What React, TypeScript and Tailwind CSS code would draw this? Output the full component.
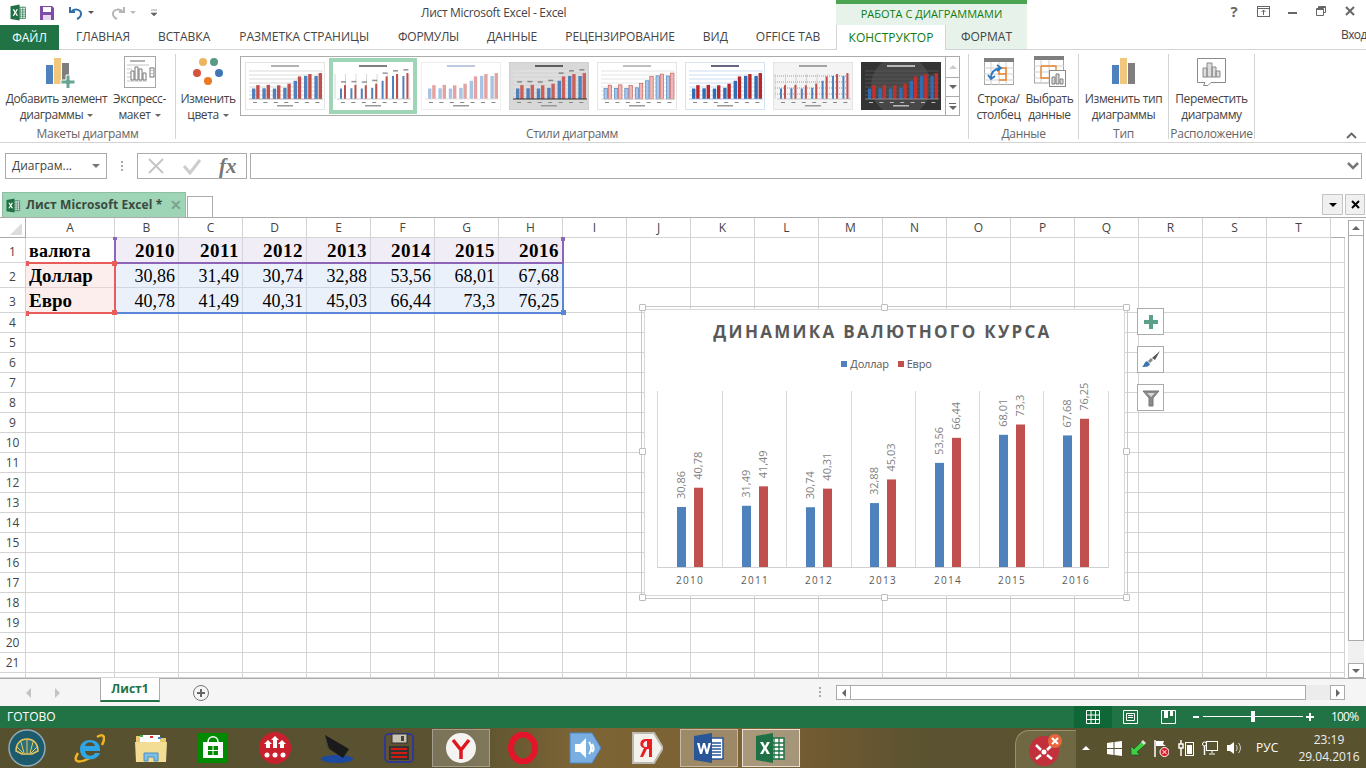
import type { ReactNode } from 'react';

const years = [2010, 2011, 2012, 2013, 2014, 2015, 2016];
const usd = ['30,86', '31,49', '30,74', '32,88', '53,56', '68,01', '67,68'];
const eur = ['40,78', '41,49', '40,31', '45,03', '66,44', '73,3', '76,25'];
const num = (s: string) => parseFloat(s.replace(',', '.'));
const columns = ['A', 'B', 'C', 'D', 'E', 'F', 'G', 'H', 'I', 'J', 'K', 'L', 'M', 'N', 'O', 'P', 'Q', 'R', 'S', 'T'];

// --- small office icons ---
function ExcelLogo({ size = 16 }: { size?: number }) {
  return (
    <svg width={size} height={size} viewBox="0 0 32 32">
      <path d="M12 6h17v21H12z" fill="#fff" stroke="#1f7145" strokeWidth="1.5" />
      <path d="M19 6v21M24 6v21M14 11h15M14 15h15M14 19h15M14 23h15" stroke="#1f7145" strokeWidth="1.3" />
      <path d="M1 4l17-3v30L1 28z" fill="#1f7145" />
      <path d="M5 10h3l2 4 2-4h3l-3.5 6 3.5 6h-3l-2-4-2 4H5l3.5-6z" fill="#fff" />
    </svg>
  );
}

function WordLogo() {
  return (
    <svg width="32" height="32" viewBox="0 0 32 32">
      <path d="M12 6h18v21H12z" fill="#fff" stroke="#2a5699" strokeWidth="1.5" />
      <path d="M19 11h9M19 14h9M19 17h9M19 20h9M19 23h9" stroke="#2a5699" strokeWidth="1.5" />
      <path d="M1 4l18-3v30L1 28z" fill="#2a5699" />
      <path d="M4 11h2.5l1.5 7 2-7h2l2 7 1.500-7H18l-3 11h-2l-2-7-2 7H7z" fill="#fff" />
    </svg>
  );
}

function BarsIcon({ plus }: { plus?: boolean }) {
  return (
    <svg width="32" height="32" viewBox="0 0 32 32">
      <rect x="1" y="9" width="7" height="19" fill="#4f81bd" />
      <rect x="9" y="2" width="7" height="26" fill="#f0c77c" />
      <rect x="17" y="7" width="7" height="21" fill="#7f7f7f" />
      {plus && <path d="M21 19h4v5h5v4h-5v5h-4v-5h-5v-4h5z" fill="#68a593" stroke="#fff" strokeWidth="1" />}
    </svg>
  );
}

function QuickLayoutIcon() {
  return (
    <svg width="32" height="32" viewBox="0 0 32 32" fill="none">
      <rect x=".5" y=".5" width="31" height="31" fill="#fff" stroke="#a6a6a6" />
      <path d="M6 5h15" stroke="#9a9a9a" strokeWidth="1.500" />
      <path d="M3 9h22M3 13h5M3 17h5M3 21h5M3 25h20" stroke="#c4c4c4" />
      <path d="M7 24v-9h3v9zM11 24V11h3v13zM15 24v-11h3v11zM19 24v-7h3v7z" fill="#fff" stroke="#777" />
      <rect x="26" y="12" width="4" height="9" stroke="#777" />
      <path d="M28 14v1M28 17v1" stroke="#777" />
    </svg>
  );
}

function ColorsIcon() {
  return (
    <svg width="32" height="32" viewBox="0 0 32 32">
      <circle cx="11" cy="6" r="4" fill="#edb55e" />
      <circle cx="22" cy="6" r="4" fill="#579b85" />
      <circle cx="5" cy="17" r="4" fill="#d6533d" />
      <circle cx="27" cy="17" r="4" fill="#3f77b4" />
      <circle cx="16" cy="25" r="4" fill="#ea7a25" />
    </svg>
  );
}

function SwitchRowIcon() {
  return (
    <svg width="30" height="28" viewBox="0 0 30 28" fill="none">
      <rect x=".5" y=".5" width="29" height="26" fill="#fff" stroke="#a6a6a6" />
      <rect x="0" y="0" width="30" height="4" fill="#7f7f7f" />
      <path d="M0 10h30M0 16h30M0 22h30M7 4v23M15 4v23M22 4v23" stroke="#cfcfcf" />
      <path d="M15 16h7v-6h-7zM15 22h7v-6" stroke="#e8842c" strokeWidth="1.500" />
      <path d="M7 20c0-6 4-9 9-10M13 7l4 3-4 3M4 17l3 4 4-3" stroke="#2f77c0" strokeWidth="1.800" />
    </svg>
  );
}

function SelectDataIcon() {
  return (
    <svg width="32" height="32" viewBox="0 0 32 32" fill="none">
      <rect x=".5" y="1" width="29" height="26" fill="#fff" stroke="#a6a6a6" />
      <rect x="0" y="0" width="30" height="4" fill="#7f7f7f" />
      <path d="M0 10h30M0 16h30M0 22h30M7 4v23M15 4v23" stroke="#cfcfcf" />
      <path d="M7 10h15v7M7 10v12h8" stroke="#e8842c" strokeWidth="1.300" />
      <rect x="15.500" y="14.500" width="16" height="16" fill="#fff" stroke="#8a8a8a" />
      <path d="M18 28v-7h3v7zM22 28v-10h3v10zM26 28v-5h3v5z" fill="#d8d8d8" stroke="#7f7f7f" />
    </svg>
  );
}

function MoveChartIcon() {
  return (
    <svg width="30" height="28" viewBox="0 0 30 28" fill="none">
      <path d="M.5.500h28v24H14l-3 3H6.500l1.500-3H.5z" fill="#fff" stroke="#8a8a8a" />
      <path d="M6 19v-9h4v9zM10 19V5h5v14zM15 19V9h4v10zM19 19v-6h4v6z" fill="#dcdcdc" stroke="#8a8a8a" />
    </svg>
  );
}

function Caret({ className = 'border-t-[#666]' }: { className?: string }) {
  return <span className={`inline-block w-0 h-0 border-x-[3px] border-x-transparent border-t-[3px] ml-1 align-middle ${className}`} />;
}

// --- gallery thumbnails (illegible tiny previews) ---
type ThumbStyle = {
  bg: string;
  border: string;
  blue: string;
  red: string;
  title: string;
  grid?: 'h' | 'v' | 'hatch';
  gridColor?: string;
  base?: string;
  outline?: boolean;
  labels?: boolean;
  slim?: boolean;
};

const thumbs: ThumbStyle[] = [
  { bg: '#fff', border: '#e4e4e4', blue: '#4f81bd', red: '#c0504d', title: '#999', grid: 'h', gridColor: '#d0d0d0', base: '#999' },
  { bg: '#fff', border: '#fff', blue: '#4f81bd', red: '#c0504d', title: '#555', grid: 'v', gridColor: '#cfcfcf', base: '#bbb', labels: true, slim: true },
  { bg: '#fff', border: '#eee', blue: '#a9c3e4', red: '#e3a3a0', title: '#a8b7d6', grid: 'h', gridColor: '#fff', base: '#ddd' },
  { bg: '#d8d8d8', border: '#d0d0d0', blue: '#4f81bd', red: '#c9605c', title: '#333', grid: 'h', gridColor: '#e8e8e8', base: '#333', labels: true },
  { bg: '#fff', border: '#e4e4e4', blue: '#a9c6ea', red: '#f0b8b4', title: '#aaa', grid: 'h', gridColor: '#ddd', base: '#ccc', outline: true },
  { bg: '#fff', border: '#d5e4f5', blue: '#2f6db5', red: '#b8282b', title: '#335', grid: 'h', gridColor: '#bcd4ee', base: '#8fb3dc' },
  { bg: '#f4f4f4', border: '#e4e4e4', blue: '#4f81bd', red: '#c0504d', title: '#888', grid: 'hatch', gridColor: '#c9c9c9', base: '#bbb', slim: true },
  { bg: '#333', border: '#333', blue: '#2f6db5', red: '#c2302e', title: '#ddd', grid: 'h', gridColor: '#5a5a5a', base: '#999' },
];

function Thumb({ s, selected }: { s: ThumbStyle; selected?: boolean }) {
  const base = 37;
  return (
    <div className={`w-[80px] h-[48px] shrink-0 ${selected ? 'ring-4 ring-[#9fd5b7]' : ''}`}>
      <svg width="80" height="48" viewBox="0 0 80 48">
        <rect x=".5" y=".5" width="79" height="47" fill={s.bg} stroke={s.border} />
        {s.bg === '#333' && <circle cx="40" cy="24" r="30" fill="#555" opacity=".6" />}
        <rect x="26" y="3" width="28" height="2" fill={s.title} opacity=".75" />
        {s.grid === 'h' && [9, 13, 17, 21, 25, 29, 33].map((y) => <path key={y} d={`M4 ${y}h74`} stroke={s.gridColor} strokeWidth=".8" />)}
        {(s.grid === 'v' || s.grid === 'hatch') && [2, 12.500, 23, 33.500, 44, 54.500, 65, 76].map((x) => <path key={x} d={`M${x} 12V${base}`} stroke={s.gridColor} strokeWidth=".8" />)}
        {s.grid === 'hatch' && [14, 20, 26, 32].map((y) => <path key={y} d={`M2 ${y}h74`} stroke={s.gridColor} strokeWidth="2" strokeDasharray="1 1" />)}
        {years.map((_, i) => {
          const x = 7 + i * 10.4;
          const w = s.slim ? 2 : 3.4;
          const hu = num(usd[i]) * 0.34;
          const he = num(eur[i]) * 0.34;
          return (
            <g key={i}>
              <rect x={x} y={base - hu} width={w} height={hu} fill={s.blue} stroke={s.outline ? '#3f77b4' : 'none'} strokeWidth=".6" />
              <rect x={x + w + (s.slim ? 2 : 0.8)} y={base - he} width={w} height={he} fill={s.red} stroke={s.outline ? '#c0504d' : 'none'} strokeWidth=".6" />
              {s.labels && <rect x={x + 1} y={base - he - 4} width={5} height={1.500} fill="#666" opacity=".7" />}
              <rect x={x + 1} y={40} width={4} height={1} fill={s.bg === '#333' ? '#bbb' : '#888'} />
            </g>
          );
        })}
        <path d={`M4 ${base}h74`} stroke={s.base} strokeWidth={s.base === '#333' ? 1.2 : 0.8} />
        <rect x="32" y="43" width="16" height="1.500" fill={s.bg === '#333' ? '#bbb' : '#999'} />
      </svg>
    </div>
  );
}

function RibbonButton({ icon, lines, caret, width }: { icon: ReactNode; lines: string[]; caret?: boolean; width: string }) {
  return (
    <div className={`flex flex-col items-center ${width}`}>
      <div className="h-[36px] flex items-center justify-center">{icon}</div>
      <div className="text-center leading-[16px] mt-[1px] whitespace-nowrap tracking-[-0.4px]">
        <div>{lines[0]}</div>
        <div>
          {lines[1]}
          {caret && <Caret />}
        </div>
      </div>
    </div>
  );
}

function RibbonGroup({ label, width, children }: { label: string; width: string; children: ReactNode }) {
  return (
    <div className={`${width} shrink-0 flex flex-col h-[85px] mt-[4px] border-r border-[#d4d4d4]`}>
      <div className="flex-1 flex">{children}</div>
      <div className="text-center text-[#666] leading-[16px] -mb-[3px] whitespace-nowrap tracking-[-0.3px]">{label}</div>
    </div>
  );
}

function TitleBar() {
  return (
    <div className="h-[25px] flex items-center relative shrink-0 bg-white">
      <div className="ml-[10px]"><ExcelLogo size={17} /></div>
      <svg className="ml-[12px]" width="16" height="16" viewBox="0 0 16 16">
        <path d="M1 1h12l2 2v12H1z" fill="#7f4ba6" />
        <rect x="4" y="2" width="8" height="5" fill="#fff" />
        <rect x="4" y="10" width="8" height="5" fill="#e4d6ee" />
      </svg>
      <svg className="ml-[13px]" width="16" height="16" viewBox="0 0 16 16" fill="none">
        <path d="M2 2v5h5" stroke="#2f6ea9" strokeWidth="2" />
        <path d="M3 7c3-4 10-3 10 2 0 3-2 4-4 5" stroke="#2f6ea9" strokeWidth="2" />
      </svg>
      <Caret className="border-t-[#555]" />
      <svg className="ml-[16px]" width="16" height="16" viewBox="0 0 16 16" fill="none">
        <path d="M14 2v5H9" stroke="#b5b5b5" strokeWidth="2" />
        <path d="M13 7c-3-4-10-3-10 2 0 3 2 4 4 5" stroke="#b5b5b5" strokeWidth="2" />
      </svg>
      <Caret className="border-t-[#bbb]" />
      <svg className="ml-[14px]" width="8" height="8" viewBox="0 0 8 8"><path d="M1 1h6M1 4h6l-3 3z" fill="#666" stroke="#666" strokeWidth=".6" /></svg>

      <div className="absolute left-[421px] top-[4px] text-[#444] whitespace-nowrap tracking-[-0.3px]">Лист Microsoft Excel - Excel</div>

      <div className="absolute left-[836px] top-0 w-[191px] h-[25px] bg-[#e7f3ea] border-t-[4px] border-[#4aa451] text-center text-[11px] text-[#107c10] leading-[20px]">РАБОТА С ДИАГРАММАМИ</div>

      <div className="absolute left-[1228px] top-[3px] w-[12px] text-center font-bold text-[15px] leading-[17px] text-[#666]">?</div>
      <svg className="absolute left-[1257px] top-[6px]" width="13" height="11" viewBox="0 0 13 11" fill="none">
        <rect x=".5" y=".5" width="12" height="10" stroke="#666" />
        <path d="M0 2.500h13M6.500 9V4M4.500 6l2-2 2 2" stroke="#666" />
      </svg>
      <div className="absolute left-[1288px] top-[12px] w-[9px] h-[2px] bg-[#666]" />
      <svg className="absolute left-[1316px] top-[6px]" width="10" height="10" viewBox="0 0 10 10" fill="none">
        <path d="M2.500 2.500V.5h7v6H7.500M.5 2.500h7v7h-7z" stroke="#666" />
        <path d="M.5 3.500h7M2.500 1.500h7" stroke="#666" />
      </svg>
      <svg className="absolute left-[1345px] top-[6px]" width="10" height="10" viewBox="0 0 10 10"><path d="M1 1l8 8M9 1l-8 8" stroke="#666" strokeWidth="2" /></svg>
    </div>
  );
}

function TabBar() {
  const tabs: [string, string][] = [
    ['ГЛАВНАЯ', 'ml-[17px]'],
    ['ВСТАВКА', 'ml-[28px]'],
    ['РАЗМЕТКА СТРАНИЦЫ', 'ml-[29px]'],
    ['ФОРМУЛЫ', 'ml-[29px] tracking-[-0.3px]'],
    ['ДАННЫЕ', 'ml-[28px]'],
    ['РЕЦЕНЗИРОВАНИЕ', 'ml-[28px] tracking-[-0.1px]'],
    ['ВИД', 'ml-[28px]'],
    ['OFFICE TAB', 'ml-[28px]'],
  ];
  return (
    <div className="h-[25px] flex items-stretch relative shrink-0 border-b border-[#d4d4d4] bg-white">
      <div className="w-[59px] h-[25px] bg-[#217346] text-white flex items-center justify-center">ФАЙЛ</div>
      {tabs.map(([t, cls]) => (
        <div key={t} className={`${cls} text-[#444] flex items-center whitespace-nowrap`}>{t}</div>
      ))}
      <div className="absolute left-[836px] top-0 w-[110px] h-[25px] bg-white border-x border-[#d4d4d4] text-[#107c10] flex items-center justify-center">КОНСТРУКТОР</div>
      <div className="absolute left-[946px] top-0 w-[81px] h-[24px] bg-[#e7f3ea] text-[#444] flex items-center justify-center">ФОРМАТ</div>
      <div className="absolute left-[1341px] top-0 text-[#444] leading-[20px] tracking-[-0.6px]">Вход</div>
    </div>
  );
}

function Ribbon() {
  return (
    <div className="h-[93px] flex shrink-0 border-b border-[#d4d4d4] bg-white text-[#444] relative">
      <RibbonGroup label="Макеты диаграмм" width="w-[176px]">
        <RibbonButton icon={<div className="ml-[8px]"><BarsIcon plus /></div>} lines={['Добавить элемент', 'диаграммы']} caret width="w-[113px]" />
        <RibbonButton icon={<QuickLayoutIcon />} lines={['Экспресс-', 'макет']} caret width="w-[53px]" />
      </RibbonGroup>
      <RibbonGroup label="Стили диаграмм" width="w-[793px]">
        <RibbonButton icon={<ColorsIcon />} lines={['Изменить', 'цвета']} caret width="w-[64px]" />
        <div className="w-[720px] h-[60px] mt-[2px] border border-[#ababab] flex">
          <div className="flex-1 flex gap-2 pl-1 pt-[5px]">
            {thumbs.map((s, i) => <Thumb key={i} s={s} selected={i === 1} />)}
          </div>
          <div className="w-[14px] border-l border-[#ababab] flex flex-col text-[#777]">
            <div className="h-[21px] border-b border-[#ababab] flex items-center justify-center">
              <span className="w-0 h-0 border-x-[4px] border-x-transparent border-b-[4px] border-b-[#ccc]" />
            </div>
            <div className="h-[19px] border-b border-[#ababab] flex items-center justify-center">
              <span className="w-0 h-0 border-x-[4px] border-x-transparent border-t-[4px] border-t-[#666]" />
            </div>
            <div className="flex-1 flex flex-col items-center justify-center">
              <span className="w-[7px] h-[1px] bg-[#666] mb-[2px]" />
              <span className="w-0 h-0 border-x-[4px] border-x-transparent border-t-[4px] border-t-[#666]" />
            </div>
          </div>
        </div>
      </RibbonGroup>
      <RibbonGroup label="Данные" width="w-[110px]">
        <RibbonButton icon={<SwitchRowIcon />} lines={['Строка/', 'столбец']} width="w-[59px]" />
        <RibbonButton icon={<SelectDataIcon />} lines={['Выбрать', 'данные']} width="w-[43px]" />
      </RibbonGroup>
      <RibbonGroup label="Тип" width="w-[90px]">
        <RibbonButton icon={<div className="ml-[6px]"><BarsIcon /></div>} lines={['Изменить тип', 'диаграммы']} width="w-full" />
      </RibbonGroup>
      <RibbonGroup label="Расположение" width="w-[86px]">
        <RibbonButton icon={<MoveChartIcon />} lines={['Переместить', 'диаграмму']} width="w-full" />
      </RibbonGroup>
      <svg className="absolute left-[1346px] top-[82px]" width="11" height="7" viewBox="0 0 11 7" fill="none"><path d="M1 6l4.500-4.500L10 6" stroke="#666" strokeWidth="1.800" /></svg>
    </div>
  );
}

function FormulaBar() {
  return (
    <div className="h-[48px] shrink-0 bg-white pt-[10px] pl-[5px] flex items-start text-[#444]">
      <div className="w-[102px] h-[26px] border border-[#ababab] flex items-center pl-[6px] pr-[6px] justify-between">
        <span>Диаграм...</span>
        <span className="w-0 h-0 border-x-[4px] border-x-transparent border-t-[4px] border-t-[#777]" />
      </div>
      <div className="w-[30px] h-[26px] flex flex-col items-center justify-center gap-[2px]">
        <span className="w-[2px] h-[2px] bg-[#aaa]" />
        <span className="w-[2px] h-[2px] bg-[#aaa]" />
        <span className="w-[2px] h-[2px] bg-[#aaa]" />
      </div>
      <div className="w-[110px] h-[26px] border border-[#ababab] flex items-center pl-[9px] gap-[17px]">
        <svg width="18" height="18" viewBox="0 0 18 18"><path d="M2 2l14 14M16 2L2 16" stroke="#c6c6c6" strokeWidth="2" /></svg>
        <svg width="20" height="18" viewBox="0 0 20 18" fill="none"><path d="M2 9l6 7L18 3" stroke="#cdcdcd" strokeWidth="3" /></svg>
        <span className="font-['Liberation_Serif',serif] italic font-bold text-[21px] leading-none text-[#777]">fx</span>
      </div>
      <div className="ml-[3px] w-[1112px] h-[26px] border border-[#ababab] flex items-center justify-end pr-[2px]">
        <svg width="12" height="8" viewBox="0 0 12 8" fill="none"><path d="M1 1l5 5 5-5" stroke="#777" strokeWidth="2.500" /></svg>
      </div>
    </div>
  );
}

function DocTabs() {
  return (
    <div className="h-[27px] shrink-0 bg-white border-b border-[#ababab] flex items-end pl-[2px] relative">
      <div className="w-[184px] h-[25px] bg-[#9fd5b7] border border-[#8fbfa3] border-b-0 flex items-center pl-[3px] font-bold text-[#3a4a42]">
        <ExcelLogo size={15} />
        <span className="ml-[5px] whitespace-nowrap tracking-[0.1px]">Лист Microsoft Excel *</span>
        <span className="ml-[8px] text-[#7ba38c] text-[14px] leading-none">✕</span>
      </div>
      <div className="ml-[1px] w-[26px] h-[21px] border border-[#ababab] border-b-0 bg-white" />
      <div className="absolute right-[23px] top-[3px] w-[21px] h-[21px] bg-[#f0f0f0] border border-[#c4c4c4] flex items-center justify-center">
        <span className="w-0 h-0 border-x-[4px] border-x-transparent border-t-[4px] border-t-black" />
      </div>
      <div className="absolute right-[1px] top-[3px] w-[20px] h-[21px] bg-[#f0f0f0] border border-[#c4c4c4] flex items-center justify-center">
        <svg width="9" height="9" viewBox="0 0 9 9"><path d="M1 1l7 7M8 1L1 8" stroke="#000" strokeWidth="2" /></svg>
      </div>
    </div>
  );
}

function HeaderCell({ className = '', children }: { className?: string; children?: ReactNode }) {
  return <div className={`border-r border-b border-[#d4d4d4] bg-white text-[#444] flex items-center justify-center overflow-hidden ${className}`}>{children}</div>;
}

function Cell({ className = '', children }: { className?: string; children?: ReactNode }) {
  return <div className={`border-r border-b flex items-center overflow-hidden whitespace-nowrap font-['Liberation_Serif',serif] text-black ${className}`}>{children}</div>;
}

function SheetGrid() {
  const blankRows = Array.from({ length: 18 }, (_, i) => i + 4);
  return (
    <div className="grid grid-cols-[26px_89px_repeat(19,64px)_14px] grid-rows-[20px_25px_25px_25px_repeat(18,20px)_5px] w-[1345px] h-[460px] overflow-hidden">
      <div className="border-r border-b border-[#ababab] bg-white flex items-end justify-end pr-[3px] pb-[2px]">
        <span className="w-0 h-0 border-l-[12px] border-l-transparent border-b-[12px] border-b-[#dcdcdc]" />
      </div>
      {columns.map((c) => <HeaderCell key={c}>{c}</HeaderCell>)}
      <div className="border-b border-[#ababab] bg-white" />

      <HeaderCell className="pt-[3px]">1</HeaderCell>
      <Cell className="border-[#d4d4d4] bg-white font-bold text-[18px] pl-[3px] pt-[2px] tracking-[0.2px]">валюта</Cell>
      {years.map((y) => (
        <Cell key={y} className="border-[#d5d3dd] bg-[#f0edf6] font-bold text-[19px] justify-end pr-[3px] pt-[2px] tracking-[0.5px]">{y}</Cell>
      ))}
      {Array.from({ length: 13 }, (_, i) => <Cell key={i} className="border-[#d4d4d4]" />)}

      <HeaderCell className="pt-[3px]">2</HeaderCell>
      <Cell className="border-[#e6d4d4] bg-[#fdeeee] font-bold text-[19px] pl-[3px] pt-[3px]">Доллар</Cell>
      {usd.map((v) => <Cell key={v} className="border-[#cfd5e2] bg-[#ebf1fb] text-[18px] justify-end pr-[3px] pt-[3px]">{v}</Cell>)}
      {Array.from({ length: 13 }, (_, i) => <Cell key={i} className="border-[#d4d4d4]" />)}

      <HeaderCell className="pt-[3px]">3</HeaderCell>
      <Cell className="border-[#e6d4d4] bg-[#fdeeee] font-bold text-[19px] pl-[3px] pt-[3px]">Евро</Cell>
      {eur.map((v) => <Cell key={v} className="border-[#cfd5e2] bg-[#ebf1fb] text-[18px] justify-end pr-[3px] pt-[3px]">{v}</Cell>)}
      {Array.from({ length: 13 }, (_, i) => <Cell key={i} className="border-[#d4d4d4]" />)}

      {blankRows.map((r) => (
        <div key={r} className="contents">
          <HeaderCell className="pt-[1px]">{r}</HeaderCell>
          {Array.from({ length: 21 }, (_, i) => <Cell key={i} className="border-[#d4d4d4]" />)}
        </div>
      ))}
      <HeaderCell />
      {Array.from({ length: 21 }, (_, i) => <Cell key={i} className="border-[#d4d4d4]" />)}
    </div>
  );
}

function RangeMarks() {
  return (
    <>
      <div className="absolute left-[114px] top-[20px] w-[2px] h-[24px] bg-[#8e64b8]" />
      <div className="absolute left-[113px] top-[19px] w-[4px] h-[3px] bg-[#8e64b8]" />
      <div className="absolute left-[115px] top-[44px] w-[449px] h-[2px] bg-[#8e64b8]" />
      <div className="absolute left-[562px] top-[20px] w-[2px] h-[25px] bg-[#8e64b8]" />
      <div className="absolute left-[561px] top-[19px] w-[4px] h-[4px] bg-[#8e64b8]" />
      <div className="absolute left-[562px] top-[46px] w-[2px] h-[50px] bg-[#5b85d8]" />
      <div className="absolute left-[115px] top-[94px] w-[449px] h-[2px] bg-[#5b85d8]" />
      <div className="absolute left-[561px] top-[92px] w-[5px] h-[5px] bg-[#5b85d8]" />
      <div className="absolute left-[27px] top-[44px] w-[87px] h-[2px] bg-[#e85c5c]" />
      <div className="absolute left-[27px] top-[94px] w-[87px] h-[2px] bg-[#e85c5c]" />
      <div className="absolute left-[114px] top-[44px] w-[2px] h-[52px] bg-[#e85c5c]" />
      <div className="absolute left-[26px] top-[43px] w-[3px] h-[5px] bg-[#e85c5c]" />
      <div className="absolute left-[26px] top-[93px] w-[3px] h-[5px] bg-[#e85c5c]" />
      <div className="absolute left-[112px] top-[43px] w-[5px] h-[5px] bg-[#e85c5c]" />
      <div className="absolute left-[112px] top-[92px] w-[5px] h-[5px] bg-[#e85c5c]" />
    </>
  );
}

function Handle({ className }: { className: string }) {
  return <span className={`absolute w-[7px] h-[7px] rounded-[1px] bg-white border border-[#bdbdbd] ${className}`} />;
}

function Chart() {
  const barX = [32, 97, 161, 225, 290, 354, 418];
  const grid = [12, 77, 141, 206, 270, 334, 398, 463];
  return (
    <div className="absolute left-[641px] top-[88px] w-[487px] h-[293px] border border-[#c8c8c8] p-[2px]">
      <Handle className="-left-[3px] -top-[3px]" />
      <Handle className="left-[239px] -top-[3px]" />
      <Handle className="-right-[3px] -top-[3px]" />
      <Handle className="-left-[3px] top-[141px]" />
      <Handle className="-right-[3px] top-[141px]" />
      <Handle className="-left-[3px] -bottom-[3px]" />
      <Handle className="left-[239px] -bottom-[3px]" />
      <Handle className="-right-[3px] -bottom-[3px]" />
      <div className="w-full h-full bg-white border border-[#d9d9d9] flex flex-col items-center">
        <div className="mt-[10px] -ml-[4px] h-[24px] leading-[24px] font-bold text-[17px] tracking-[2.3px] text-[#595959] whitespace-nowrap">ДИНАМИКА ВАЛЮТНОГО КУРСА</div>
        <div className="mt-[12px] ml-[4px] h-[16px] flex items-center text-[11px] tracking-[-0.2px] text-[#595959]">
          <span className="w-[6px] h-[6px] bg-[#4f81bd] mr-[3px]" />
          <span>Доллар</span>
          <span className="w-[6px] h-[6px] bg-[#c0504d] ml-[9px] mr-[3px]" />
          <span>Евро</span>
        </div>
        <svg width="479" height="205" viewBox="0 0 479 205" className="mt-[13px] shrink-0 overflow-visible">
          {grid.map((x) => <path key={x} d={`M${x + 0.5} 6V182`} stroke="#d9d9d9" />)}
          <path d="M12 182.500h452" stroke="#d0d0d0" />
          {years.map((y, i) => {
            const hu = num(usd[i]) * 1.944;
            const he = num(eur[i]) * 1.944;
            const x = barX[i];
            return (
              <g key={y}>
                <rect x={x} y={182 - hu} width="9" height={hu} fill="#4f81bd" />
                <rect x={x + 17} y={182 - he} width="9" height={he} fill="#c0504d" />
                <text transform={`translate(${x + 8} ${182 - hu - 8}) rotate(-90)`} fontSize="11" fill="#7f7f7f">{usd[i]}</text>
                <text transform={`translate(${x + 25} ${182 - he - 8}) rotate(-90)`} fontSize="11" fill="#7f7f7f">{eur[i]}</text>
                <text x={x + 13} y="199" textAnchor="middle" fontSize="10" letterSpacing="1.300" fill="#595959">{y}</text>
              </g>
            );
          })}
        </svg>
      </div>
    </div>
  );
}

function ChartTools() {
  return (
    <div className="absolute left-[1137px] top-[90px] flex flex-col gap-[11px]">
      <div className="w-[27px] h-[27px] bg-white border border-[#ababab] flex items-center justify-center">
        <svg width="16" height="16" viewBox="0 0 16 16"><path d="M6 1h4v5h5v4h-5v5H6v-5H1V6h5z" fill="#5ba08a" /></svg>
      </div>
      <div className="w-[27px] h-[27px] bg-white border border-[#ababab] flex items-center justify-center">
        <svg width="20" height="18" viewBox="0 0 20 18">
          <path d="M1 16c2-1 2-5 5-6l3 3c-1 3-4 3-8 3z" fill="#3f77b4" />
          <path d="M7 10l2 2 3-3-2-2z" fill="#888" />
          <path d="M11 7l8-7-5 9z" fill="#555" />
        </svg>
      </div>
      <div className="w-[27px] h-[27px] bg-white border border-[#ababab] flex items-center justify-center">
        <svg width="18" height="18" viewBox="0 0 18 18"><path d="M1 2h16l-6 7v8H7V9z" fill="#8a8a8a" stroke="#777" /><path d="M5 4h8l-4 4z" fill="#d5d5d5" /></svg>
      </div>
    </div>
  );
}

function VScroll() {
  return (
    <div className="w-[21px] shrink-0 pl-[3px] pr-[2px] pt-[2px] flex flex-col bg-white">
      <div className="h-[16px] border border-[#ababab] flex items-center justify-center">
        <span className="w-0 h-0 border-x-[4px] border-x-transparent border-b-[4px] border-b-[#666]" />
      </div>
      <div className="h-[405px] border border-[#ababab] border-t-0 bg-white" />
      <div className="flex-1 bg-[#f0f0f0]" />
      <div className="h-[15px] border border-[#ababab] bg-white flex items-center justify-center">
        <span className="w-0 h-0 border-x-[4px] border-x-transparent border-t-[4px] border-t-[#666]" />
      </div>
    </div>
  );
}

function SheetTabs() {
  return (
    <div className="h-[28px] shrink-0 bg-[#f5f5f5] border-t border-[#ababab] flex items-start relative">
      <span className="mt-[9px] ml-[26px] w-0 h-0 border-y-[5px] border-y-transparent border-r-[5px] border-r-[#c4c4c4]" />
      <span className="mt-[9px] ml-[24px] w-0 h-0 border-y-[5px] border-y-transparent border-l-[5px] border-l-[#c4c4c4]" />
      <div className="ml-[40px] w-[60px] h-[24px] bg-white border-x border-[#ababab] border-b-2 border-b-[#217346] text-[#217346] font-bold flex items-center justify-center -mt-[1px]">Лист1</div>
      <div className="ml-[33px] mt-[6px] w-[16px] h-[16px] rounded-full border border-[#777] flex items-center justify-center">
        <svg width="8" height="8" viewBox="0 0 8 8"><path d="M4 0v8M0 4h8" stroke="#666" strokeWidth="2" /></svg>
      </div>
      <div className="absolute left-[819px] top-[8px] flex flex-col gap-[2px]">
        <span className="w-[2px] h-[2px] bg-[#aaa]" />
        <span className="w-[2px] h-[2px] bg-[#aaa]" />
        <span className="w-[2px] h-[2px] bg-[#aaa]" />
      </div>
      <div className="absolute left-[836px] top-[6px] w-[509px] h-[15px] flex">
        <div className="w-[15px] border border-[#ababab] bg-white flex items-center justify-center">
          <span className="w-0 h-0 border-y-[4px] border-y-transparent border-r-[4px] border-r-[#666]" />
        </div>
        <div className="w-[455px] border border-[#ababab] border-l-0 bg-white" />
        <div className="flex-1 bg-[#ececec]" />
        <div className="w-[15px] border border-[#ababab] bg-white flex items-center justify-center">
          <span className="w-0 h-0 border-y-[4px] border-y-transparent border-l-[4px] border-l-[#666]" />
        </div>
      </div>
    </div>
  );
}

function StatusBar() {
  return (
    <div className="h-[22px] shrink-0 bg-[#217346] text-white flex items-center relative">
      <span className="ml-[7px]">ГОТОВО</span>
      <div className="absolute left-[1074px] top-0 w-[38px] h-[22px] bg-[#0f6637] flex items-center justify-center">
        <svg width="14" height="14" viewBox="0 0 14 14" fill="none"><path d="M.5.5h13v13H.5zM.5 5h13M.5 9.500h13M5 .5v13M9.500.5v13" stroke="#fff" /></svg>
      </div>
      <div className="absolute left-[1123px] top-[4px]">
        <svg width="15" height="14" viewBox="0 0 15 14" fill="none"><path d="M.5.5h14v13H.5z" stroke="#fff" /><path d="M3.500 3.500h8v7h-8zM5 5.500h5M5 7.500h5" stroke="#fff" /></svg>
      </div>
      <div className="absolute left-[1161px] top-[4px]">
        <svg width="15" height="14" viewBox="0 0 15 14" fill="none"><path d="M.5.5h14v13H.5z" stroke="#fff" /><path d="M3 1h4v7H3zM9 1h3v5H9z" fill="#fff" /></svg>
      </div>
      <div className="absolute left-[1193px] top-[10px] w-[6px] h-[2px] bg-white" />
      <div className="absolute left-[1203px] top-[10px] w-[100px] h-[1px] bg-white" />
      <div className="absolute left-[1251px] top-[5px] w-[4px] h-[11px] bg-white" />
      <svg className="absolute left-[1306px] top-[7px]" width="8" height="8" viewBox="0 0 8 8"><path d="M4 0v8M0 4h8" stroke="#fff" strokeWidth="2" /></svg>
      <span className="absolute left-[1331px] top-[2px] leading-[18px] tracking-[-0.8px]">100%</span>
    </div>
  );
}

// --- taskbar app icons ---
const appIcons: ReactNode[] = [
  <svg key="shell" width="38" height="38" viewBox="0 0 38 38">
    <circle cx="19" cy="19" r="18" fill="#1d5a6c" stroke="#8faab5" strokeWidth="1.500" />
    <path d="M8 22c0-8 5-12 11-12s11 4 11 12l-6 3H14z" fill="#2a6f7a" stroke="#e8c55a" strokeWidth="1.500" />
    <path d="M19 11v13M13 13l3 11M25 13l-3 11M9 18l6 6M29 18l-6 6" stroke="#e8c55a" />
  </svg>,
  <svg key="ie" width="32" height="32" viewBox="0 0 32 32" fill="none">
    <path d="M5 21c-6 9 0 11 12 5M24 5c7-4 9 0 5 8" stroke="#eeb422" strokeWidth="2.500" />
    <path d="M27 19H12c1 6 8 6 10 2h5c-3 9-20 9-20-4C7 5 27 5 27 17zM12 14h10c-1-5-9-5-10 0z" fill="#2fa6e6" fillRule="evenodd" />
  </svg>,
  <svg key="folder" width="34" height="32" viewBox="0 0 34 32">
    <path d="M2 4h11l2 2h17v20H2z" fill="#e8c96f" />
    <rect x="6" y="3" width="20" height="7" fill="#fff" />
    <rect x="6" y="3" width="3" height="2" fill="#4a4" />
    <rect x="16" y="4" width="3" height="2" fill="#c33" />
    <rect x="24" y="5" width="3" height="2" fill="#38c" />
    <path d="M1 10h32l-1 20H2z" fill="#f3dc94" />
    <path d="M10 29v-8h14v8h-4v-4h-6v4z" fill="#7dbde6" stroke="#4a90c0" />
  </svg>,
  <svg key="store" width="30" height="30" viewBox="0 0 30 30">
    <rect width="30" height="30" fill="#008a00" />
    <path d="M5 9h20v16H5z" fill="#fff" />
    <path d="M10 9c0-7 10-7 10 0" fill="none" stroke="#fff" strokeWidth="1.500" />
    <path d="M10 13h4.500v4H10zM15.500 13H20v4h-4.500zM10 18h4.500v4H10zM15.500 18H20v4h-4.500z" fill="#008a00" />
  </svg>,
  <svg key="red" width="32" height="32" viewBox="0 0 32 32">
    <circle cx="16" cy="16" r="16" fill="#c8202c" />
    <path d="M9 8l4 4h-2v4H7v-4H5zM23 8l4 4h-2v4h-4v-4h-2zM16 4l4 4h-2v8h-4V8h-2z" fill="#fff" />
    <circle cx="8" cy="23" r="2.500" fill="#fff" /><circle cx="16" cy="23" r="2.500" fill="#fff" /><circle cx="24" cy="23" r="2.500" fill="#fff" />
  </svg>,
  <svg key="laptop" width="32" height="30" viewBox="0 0 32 30">
    <ellipse cx="16" cy="26" rx="16" ry="4" fill="#1c4aa0" />
    <path d="M4 2l24 14-6 9-14-9z" fill="#1a1a1a" />
    <path d="M4 2l2 12 16 11-14-9z" fill="#444" />
  </svg>,
  <svg key="floppy" width="30" height="30" viewBox="0 0 30 30">
    <rect x="1" y="1" width="28" height="28" rx="4" fill="#5e5230" stroke="#2230b8" strokeWidth="1.500" />
    <rect x="8" y="1" width="15" height="9" fill="#c9c5b4" stroke="#333" />
    <rect x="17" y="3" width="3" height="5" fill="#444" />
    <rect x="5" y="13" width="20" height="14" fill="#333" />
    <path d="M7 15h16v2H7zM7 19h16v2H7zM7 23h16v2H7z" fill="#d01c14" />
  </svg>,
  <svg key="ya" width="30" height="30" viewBox="0 0 30 30">
    <circle cx="15" cy="15" r="15" fill="#f5f3f0" />
    <path d="M7 7l8 10 8-10M15 17v9" fill="none" stroke="#e0161e" strokeWidth="3.500" />
  </svg>,
  <svg key="opera" width="30" height="32" viewBox="0 0 30 32" fill="none">
    <ellipse cx="15" cy="16" rx="12" ry="13.500" stroke="#e3152a" strokeWidth="6" />
  </svg>,
  <svg key="sound" width="32" height="32" viewBox="0 0 32 32">
    <path d="M1 1h22l9 15-9 15H1z" fill="#7aaee0" stroke="#4a86c8" />
    <path d="M6 12h5l6-6v20l-6-6H6z" fill="#fff" />
    <path d="M20 10c3 4 3 8 0 12M23 12c2 3 2 6 0 8" stroke="#fff" strokeWidth="2" fill="none" />
  </svg>,
  <svg key="yabtn" width="32" height="32" viewBox="0 0 32 32">
    <path d="M2 1h21l9 15-9 15H2z" fill="#f4f1ec" stroke="#bdb9b0" strokeWidth="2" />
    <path d="M18 7h-4c-6 0-6 9-1 9l-4 9h3l4-8h2v8h3V7zm-2 2v6c-5 1-5-6 0-6z" fill="#ea1c24" />
  </svg>,
  <WordLogo key="word" />,
  <ExcelLogo key="excel" size={32} />,
];

function TaskItem({ icon, index }: { icon: ReactNode; index: number }) {
  const cls =
    index === 7
      ? 'bg-white/20 border border-white/30'
      : index === 11
        ? 'bg-white/25 border border-white/40'
        : index === 12
          ? 'bg-white/35 border border-white/70'
          : '';
  return <div className={`w-[58px] h-[38px] shrink-0 flex items-center justify-center ${cls}`}>{icon}</div>;
}

function Taskbar() {
  return (
    <div className="h-[40px] shrink-0 flex items-center text-white bg-[linear-gradient(90deg,#57502e_0%,#5a5230_34%,#7c6435_42%,#7d6234_55%,#705a32_60%,#5a5230_68%,#58522f_100%)]">
      <div className="flex gap-1 -ml-[2px]">
        {appIcons.map((icon, i) => <TaskItem key={i} icon={icon} index={i} />)}
      </div>
      <div className="ml-[215px] w-[61px] h-[38px] mt-[2px] rounded-tl-[14px] bg-[#6f6843] border-t border-l border-[#99916a] flex items-center justify-center">
        <svg width="36" height="34" viewBox="0 0 36 34">
          <circle cx="16" cy="18" r="15" fill="#c2303c" />
          <path d="M8 12l5 5M24 12l-5 5M8 26l5-4M24 26l-5-4" stroke="#fff" strokeWidth="2.500" />
          <circle cx="16" cy="19" r="2.500" fill="#fff" />
          <circle cx="27" cy="8" r="7" fill="#e8663c" />
          <path d="M24 5l6 6M30 5l-6 6" stroke="#fff" strokeWidth="2" />
        </svg>
      </div>
      <span className="ml-[6px] w-0 h-0 border-x-[4px] border-x-transparent border-b-[4px] border-b-white" />
      <svg className="ml-[17px]" width="15" height="15" viewBox="0 0 15 15"><path d="M0 2l6.500-1v6H0zM7.500 1L15 0v7H7.500zM0 8h6.500v6L0 13zM7.500 8H15v7l-7.500-1z" fill="#fff" /></svg>
      <svg className="ml-[7px]" width="17" height="17" viewBox="0 0 17 17"><path d="M2 6v9h9l-3-3 8-7-3-4-8 8z" fill="#3fcf3f" stroke="#143" strokeWidth=".6" /><path d="M12 2l2-2 3 3-2 2z" fill="#ddd" /></svg>
      <svg className="ml-[8px]" width="15" height="17" viewBox="0 0 15 17"><path d="M1 0v17" stroke="#fff" strokeWidth="1.500" /><path d="M2 1h8l-1 3 3 2H2z" fill="#fff" /><circle cx="10.500" cy="12" r="4.500" fill="#d81e2c" stroke="#fff" /><path d="M8.500 10l4 4M12.500 10l-4 4" stroke="#fff" /></svg>
      <svg className="ml-[9px]" width="16" height="16" viewBox="0 0 16 16" fill="none"><path d="M3 0v4M1 4h4v4H1zM3 8v8" stroke="#fff" strokeWidth="1.500" /><rect x="7.500" y="2.500" width="8" height="13" stroke="#fff" /><rect x="9" y="5" width="5" height="9" fill="#fff" /></svg>
      <svg className="ml-[8px]" width="16" height="16" viewBox="0 0 16 16" fill="none"><rect x="4.500" y="1.500" width="11" height="9" stroke="#fff" /><path d="M10 11v2M7 14h6" stroke="#fff" /><circle cx="2.500" cy="4" r="2" stroke="#fff" /><path d="M2.500 6v9" stroke="#fff" strokeWidth="1.500" /></svg>
      <svg className="ml-[8px]" width="16" height="16" viewBox="0 0 16 16" fill="none"><path d="M1 5h3l4-3v12l-4-3H1z" fill="#fff" /><path d="M10 5c1.500 2 1.500 4 0 6M12.500 3c2.500 3 2.500 7 0 10" stroke="#ddd" /></svg>
      <span className="ml-[14px] w-[26px] text-[12px] whitespace-nowrap">РУС</span>
      <div className="ml-[12px] w-[70px] text-center text-[12px] leading-[17px] text-[#eee]">
        <div>23:19</div>
        <div>29.04.2016</div>
      </div>
    </div>
  );
}

export default function App() {
  return (
    <div className="w-[1366px] h-[768px] overflow-hidden flex flex-col bg-white text-[12px] font-['Open_Sans','Noto_Sans',sans-serif]">
      <TitleBar />
      <TabBar />
      <Ribbon />
      <FormulaBar />
      <DocTabs />
      <div className="flex h-[460px] shrink-0 relative">
        <SheetGrid />
        <VScroll />
        <RangeMarks />
        <Chart />
        <ChartTools />
      </div>
      <SheetTabs />
      <StatusBar />
      <Taskbar />
    </div>
  );
}
